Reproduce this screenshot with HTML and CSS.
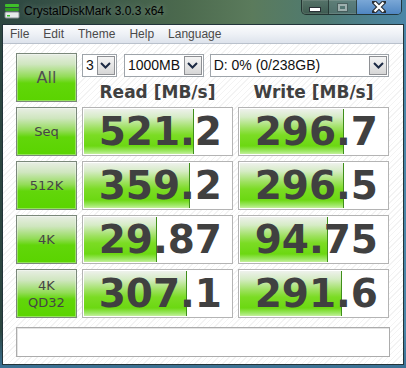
FILE: index.html
```html
<!DOCTYPE html>
<html>
<head>
    <title>CrystalDiskMark 3.0.3 x64</title>
    <link rel="stylesheet" href="styles.css">
</head>
<body>
    <div class="window">
        <div class="titlebar">
            <svg class="app-icon" width="16" height="16" viewBox="0 0 16 16">
                <rect x="1" y="1" width="14" height="3" rx="1" fill="#3fbf2a"/>
                <rect x="1" y="5" width="14" height="3" rx="1" fill="#2e9e1e"/>
                <rect x="1" y="9" width="14" height="6" rx="1" fill="#e6e9ea" stroke="#8a9296" stroke-width="1"/>
                <rect x="3" y="12" width="3" height="1.5" fill="#36c02a"/>
            </svg>
            <span class="title">CrystalDiskMark 3.0.3 x64</span>
            <div class="caption-buttons">
                <div class="cap-btn cap-min"><span class="glyph-min"></span></div>
                <div class="cap-btn cap-max"><span class="glyph-max"></span></div>
                <div class="cap-btn cap-close">
                    <svg width="14" height="12" viewBox="0 0 14 12">
                        <path d="M2 1 L12 11 M12 1 L2 11" stroke="#2a3036" stroke-width="4.5" stroke-linecap="square"/>
                        <path d="M2.5 1.5 L11.5 10.5 M11.5 1.5 L2.5 10.5" stroke="#ffffff" stroke-width="2.4"/>
                    </svg>
                </div>
            </div>
        </div>

        <div class="client">
            <div class="menubar">
                <span class="menu-item">File</span>
                <span class="menu-item">Edit</span>
                <span class="menu-item">Theme</span>
                <span class="menu-item">Help</span>
                <span class="menu-item">Language</span>
            </div>

            <div class="content">
                <div class="grid">
                    <div class="btn btn-all">All</div>
                    <div class="top-right">
                        <div class="combos">
                            <div class="combo combo-count">
                                <span class="combo-text">3</span>
                                <span class="combo-arrow"><svg width="11" height="7" viewBox="0 0 11 7"><path d="M1 1 L5.5 5.5 L10 1" fill="none" stroke="#1c2a44" stroke-width="2"/></svg></span>
                            </div>
                            <div class="combo combo-size">
                                <span class="combo-text">1000MB</span>
                                <span class="combo-arrow"><svg width="11" height="7" viewBox="0 0 11 7"><path d="M1 1 L5.5 5.5 L10 1" fill="none" stroke="#1c2a44" stroke-width="2"/></svg></span>
                            </div>
                            <div class="combo combo-drive">
                                <span class="combo-text">D: 0% (0/238GB)</span>
                                <span class="combo-arrow"><svg width="11" height="7" viewBox="0 0 11 7"><path d="M1 1 L5.5 5.5 L10 1" fill="none" stroke="#1c2a44" stroke-width="2"/></svg></span>
                            </div>
                        </div>
                        <div class="headers">
                            <div class="header">Read [MB/s]</div>
                            <div class="header">Write [MB/s]</div>
                        </div>
                    </div>

                    <div class="btn">Seq</div>
                    <div class="cell"><div class="bar" style="width: 110px"></div><span class="value">521.2</span></div>
                    <div class="cell"><div class="bar" style="width: 104px"></div><span class="value">296.7</span></div>

                    <div class="btn">512K</div>
                    <div class="cell"><div class="bar" style="width: 106px"></div><span class="value">359.2</span></div>
                    <div class="cell"><div class="bar" style="width: 104px"></div><span class="value">296.5</span></div>

                    <div class="btn">4K</div>
                    <div class="cell"><div class="bar" style="width: 73px"></div><span class="value">29.87</span></div>
                    <div class="cell"><div class="bar" style="width: 88px"></div><span class="value">94.75</span></div>

                    <div class="btn btn-two">4K<br>QD32</div>
                    <div class="cell"><div class="bar" style="width: 103px"></div><span class="value">307.1</span></div>
                    <div class="cell"><div class="bar" style="width: 102px"></div><span class="value">291.6</span></div>
                </div>

                <div class="status"></div>
            </div>
        </div>
    </div>
</body>
</html>
```

FILE: styles.css
```css
* {
    margin: 0;
    padding: 0;
    box-sizing: border-box;
}

body {
    width: 406px;
    height: 368px;
    overflow: hidden;
    background: #2f5f78;
}

.window {
    width: 406px;
    height: 368px;
    background: linear-gradient(180deg, rgba(0, 0, 0, 0) 0%, rgba(0, 0, 0, 0) 90%, #3b7296 100%),
                linear-gradient(90deg, #2c4640 0%, #3a5548 20%, #4c6a4e 45%, #5b7b5c 62%, #4e7a72 80%, #4a86a8 100%);
    padding-bottom: 3px;
}

.titlebar {
    height: 24px;
    display: flex;
    align-items: flex-start;
    font-family: "Liberation Sans", sans-serif;
}

.app-icon {
    margin: 3px 0 0 4px;
}

.title {
    margin: 4px 0 0 4px;
    font-size: 12px;
    line-height: 15px;
    color: #000;
    text-shadow: 0 0 6px rgba(255, 255, 255, 0.35);
}

.caption-buttons {
    margin-left: auto;
    margin-right: 4px;
    display: flex;
    height: 15px;
    border: 1px solid rgba(20, 30, 30, 0.75);
    border-top: none;
    border-radius: 0 0 5px 5px;
    overflow: hidden;
    box-shadow: inset 0 0 0 1px rgba(255, 255, 255, 0.25);
}

.cap-btn {
    height: 100%;
    display: flex;
    align-items: center;
    justify-content: center;
}

.cap-min {
    width: 27px;
    background: linear-gradient(180deg, rgba(90, 110, 100, 0.6), rgba(50, 70, 60, 0.6));
    border-right: 1px solid rgba(20, 30, 30, 0.6);
}

.glyph-min {
    width: 10px;
    height: 3px;
    margin-top: 4px;
    background: #fff;
    box-shadow: 0 0 0 1px #2a3036;
}

.cap-max {
    width: 28px;
    background: linear-gradient(180deg, rgba(110, 130, 120, 0.5), rgba(80, 100, 95, 0.5));
    border-right: 1px solid rgba(20, 30, 30, 0.6);
}

.glyph-max {
    width: 9px;
    height: 7px;
    border: 2px solid rgba(190, 200, 200, 0.7);
    box-shadow: 0 0 0 1px rgba(60, 70, 70, 0.5);
}

.cap-close {
    width: 44px;
    background: linear-gradient(180deg, #7aa7d6, #4f86c2);
}

.client {
    margin: 0 2px;
    height: 341px;
    border: 1px solid #22343a;
    background-color: #ffffff;
    background-image: repeating-linear-gradient(-45deg, #ffffff 0px, #ffffff 3px, #f3f3f3 3px, #f3f3f3 4px);
}

.menubar {
    height: 19px;
    display: flex;
    align-items: center;
    background: linear-gradient(180deg, #fbfcfd 0%, #eef1f6 50%, #dde3ec 100%);
    border-bottom: 1px solid #b9c1cc;
    font-family: "Liberation Sans", sans-serif;
    font-size: 12px;
    color: #4a4a4a;
}

.menu-item {
    padding: 0 7px;
    line-height: 18px;
}

.content {
    padding: 9px 0 0 13px;
}

.grid {
    display: grid;
    grid-template-columns: 61px 151px 151px;
    grid-template-rows: repeat(5, 49px);
    gap: 5px;
}

.btn {
    border: 1px solid #7a887a;
    background: linear-gradient(180deg, #e8eee4 0%, #cfe6bf 22%, #93dc58 48%, #62d60a 62%, #5ad400 100%);
    box-shadow: inset 0 0 0 1px rgba(255, 255, 255, 0.35);
    display: flex;
    align-items: center;
    justify-content: center;
    text-align: center;
    font-family: "DejaVu Sans", sans-serif;
    font-size: 13px;
    color: #454545;
}

.btn-all {
    font-size: 16px;
    color: #505050;
}

.btn-two {
    font-size: 13px;
    line-height: 17px;
}

.top-right {
    grid-column: 2 / 4;
    display: flex;
    flex-direction: column;
}

.combos {
    display: flex;
    margin-top: 1px;
    height: 23px;
}

.combo {
    display: flex;
    align-items: stretch;
    border: 1px solid #9ea4aa;
    background: #ffffff;
    font-family: "Liberation Sans", sans-serif;
    font-size: 14px;
    color: #111;
}

.combo-count {
    width: 35px;
    margin-right: 7px;
}

.combo-size {
    width: 80px;
    margin-right: 6px;
}

.combo-drive {
    width: 180px;
}

.combo-text {
    flex: 1;
    padding-left: 3px;
    line-height: 21px;
    white-space: nowrap;
}

.combo-arrow {
    width: 18px;
    margin: 1px;
    border: 1px solid #8e9094;
    background: linear-gradient(180deg, #f4f4f4 0%, #e6e6e6 50%, #d6d6d6 100%);
    display: flex;
    align-items: center;
    justify-content: center;
}

.headers {
    display: grid;
    grid-template-columns: 151px 151px;
    column-gap: 5px;
    padding-top: 6px;
}

.header {
    text-align: center;
    font-family: "DejaVu Sans", sans-serif;
    font-weight: bold;
    font-size: 17px;
    line-height: 18px;
    color: #404040;
}

.cell {
    display: grid;
    border: 1px solid #b4b4b4;
    background: #ffffff;
    padding: 1px;
}

.cell > * {
    grid-area: 1 / 1;
}

.bar {
    justify-self: start;
    height: 100%;
    border-right: 1px solid #3f8f1a;
    background: linear-gradient(180deg, #eef1ec 0%, #d6ecc6 18%, #9ee160 42%, #7bdc24 58%, #6cd812 82%, #9fe868 94%, #c4f09c 100%);
}

.value {
    justify-self: end;
    align-self: center;
    padding-right: 9px;
    font-family: "DejaVu Sans", sans-serif;
    font-weight: bold;
    font-size: 39px;
    line-height: 40px;
    color: #404040;
}

.status {
    margin-top: 9px;
    width: 374px;
    height: 30px;
    border: 1px solid #acacac;
    background: #ffffff;
    box-shadow: inset 1px 1px 0 #e4e4e4;
}
```
